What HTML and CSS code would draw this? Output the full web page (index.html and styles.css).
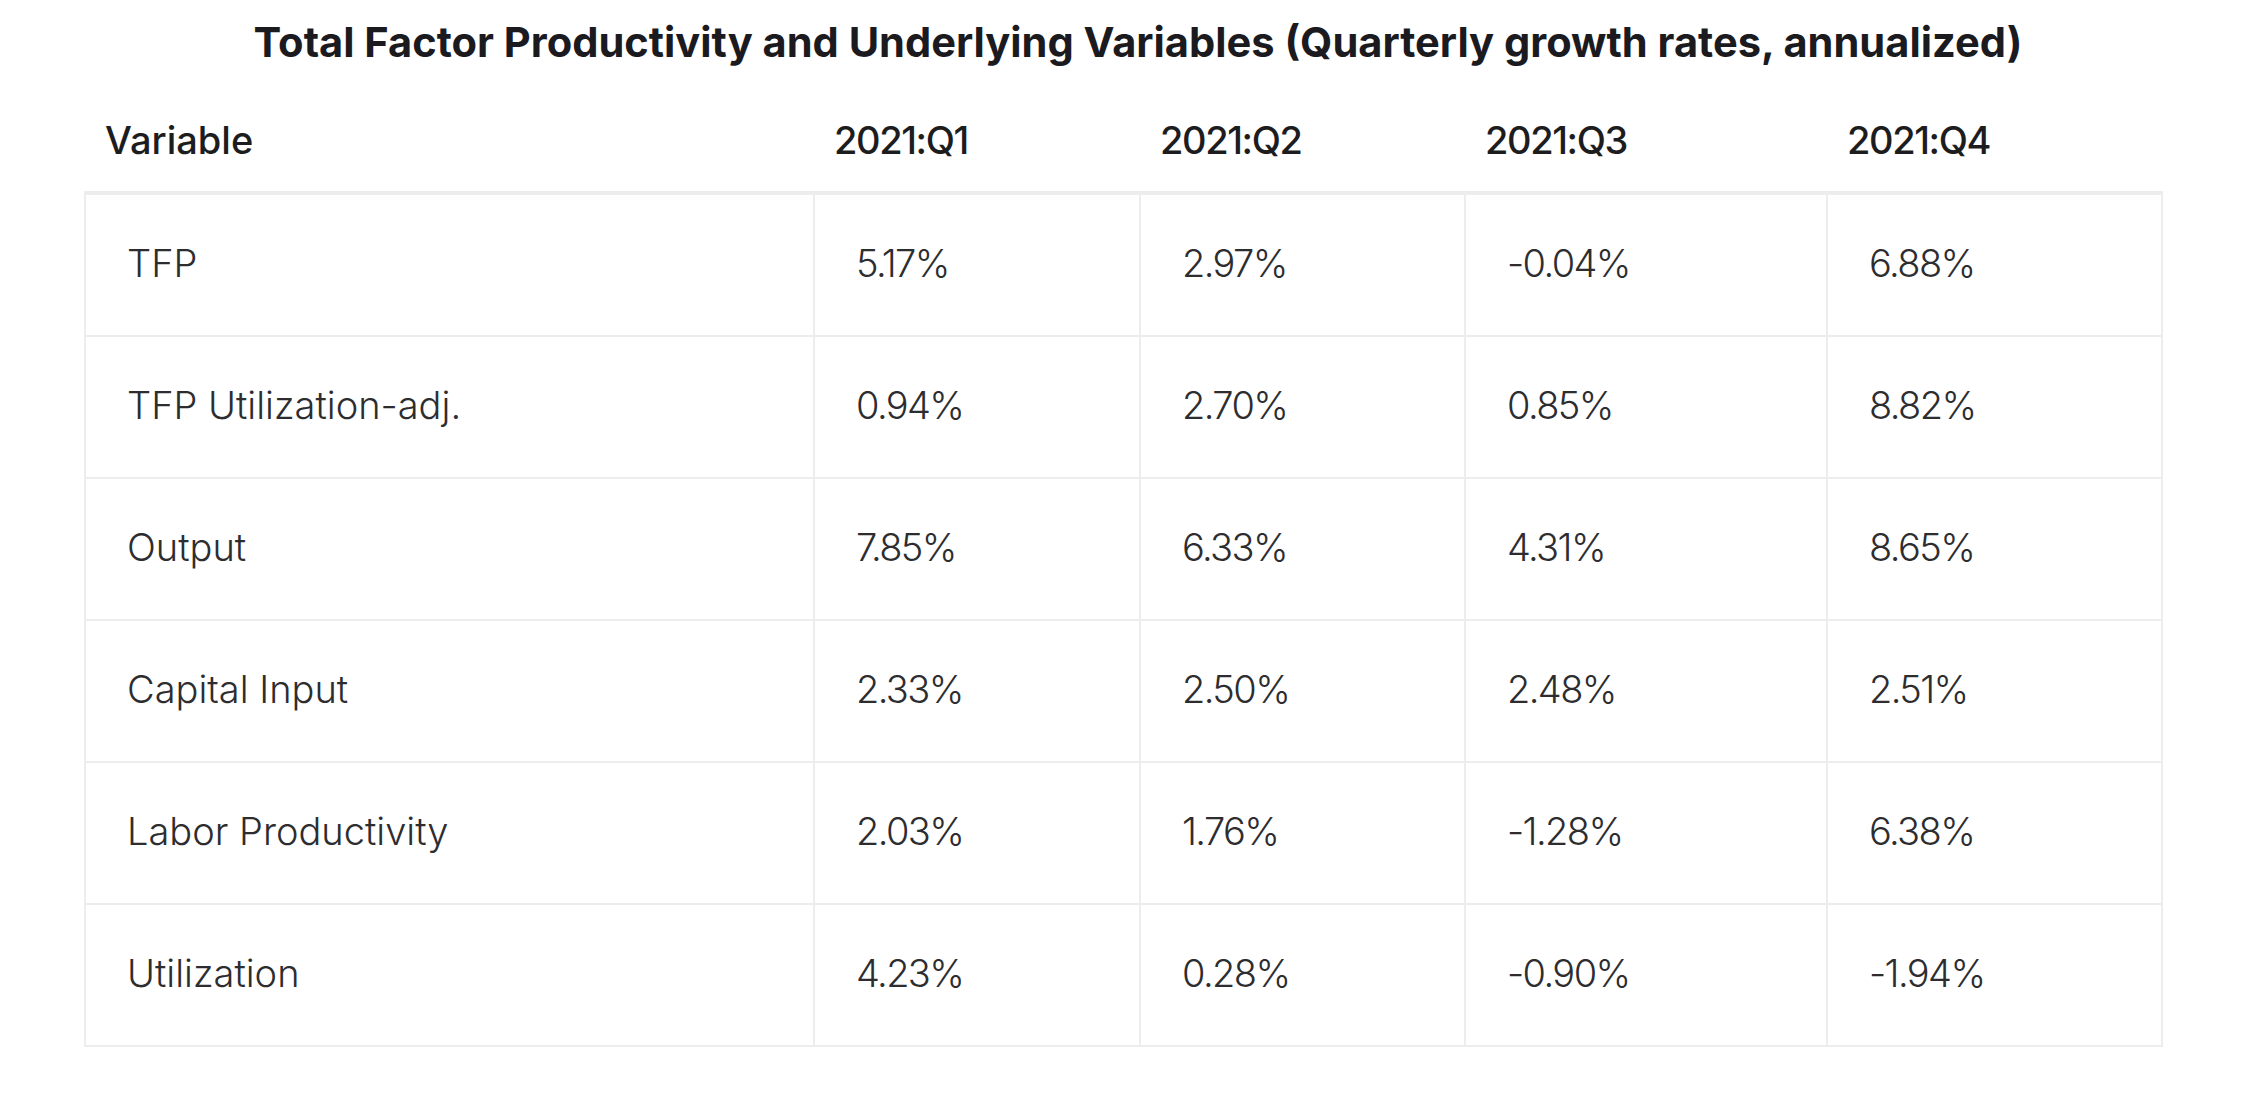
FILE: index.html
```html
<!DOCTYPE html>
<html lang="en">
<head>
<meta charset="utf-8">
<title>Total Factor Productivity</title>
<link rel="stylesheet" href="styles.css">
</head>
<body>
<main class="page">
  <h1 class="title">Total Factor Productivity and Underlying Variables (Quarterly growth rates, annualized)</h1>
  <div class="table-wrap">
    <table class="data">
      <colgroup>
        <col class="c-var">
        <col class="c-q1">
        <col class="c-q2">
        <col class="c-q3">
        <col class="c-q4">
      </colgroup>
      <thead>
        <tr>
          <th>Variable</th>
          <th class="num">2021:Q1</th>
          <th class="num">2021:Q2</th>
          <th class="num">2021:Q3</th>
          <th class="num">2021:Q4</th>
        </tr>
      </thead>
      <tbody>
        <tr><td>TFP</td><td class="num">5.17%</td><td class="num">2.97%</td><td class="num">-0.04%</td><td class="num">6.88%</td></tr>
        <tr><td>TFP Utilization-adj.</td><td class="num">0.94%</td><td class="num">2.70%</td><td class="num">0.85%</td><td class="num">8.82%</td></tr>
        <tr><td>Output</td><td class="num">7.85%</td><td class="num">6.33%</td><td class="num">4.31%</td><td class="num">8.65%</td></tr>
        <tr><td>Capital Input</td><td class="num">2.33%</td><td class="num">2.50%</td><td class="num">2.48%</td><td class="num">2.51%</td></tr>
        <tr><td>Labor Productivity</td><td class="num">2.03%</td><td class="num">1.76%</td><td class="num">-1.28%</td><td class="num">6.38%</td></tr>
        <tr><td>Utilization</td><td class="num">4.23%</td><td class="num">0.28%</td><td class="num">-0.90%</td><td class="num">-1.94%</td></tr>
      </tbody>
    </table>
  </div>
</main>
</body>
</html>
```
FILE: styles.css
```css
html, body {
  margin: 0;
  padding: 0;
  background: #ffffff;
}

body {
  font-family: Inter, "Noto Sans", sans-serif;
  color: #1d1d20;
}

.page {
  padding: 17px 0 40px;
}

.title {
  margin: 0;
  padding-left: 22px;
  font-size: 41.6px;
  line-height: 50px;
  font-weight: 700;
  text-align: center;
  color: #1b1b1f;
}

.table-wrap {
  padding: 22px 93px 0 84px;
}

.data {
  width: 100%;
  border-collapse: collapse;
  table-layout: fixed;
}

.c-var { width: 729px; }
.c-q1 { width: 326px; }
.c-q2 { width: 325px; }
.c-q3 { width: 362px; }
.c-q4 { width: 335px; }

.data th {
  text-align: left;
  font-weight: 500;
  font-size: 38px;
  line-height: 46px;
  color: #1d1d20;
  padding: 28px 20px;
  border: none;
  border-bottom: 4px solid #ededed;
}

.data th.num {
  font-variant-numeric: proportional-nums;
  letter-spacing: -1.4px;
}

.data td {
  font-weight: 300;
  font-size: 38px;
  line-height: 46px;
  color: #2d2d30;
  padding: 45px 20px 49px 41px;
  border: 2px solid #ededed;
}

.data td.num {
  font-variant-numeric: proportional-nums;
  letter-spacing: -1.6px;
}
```
